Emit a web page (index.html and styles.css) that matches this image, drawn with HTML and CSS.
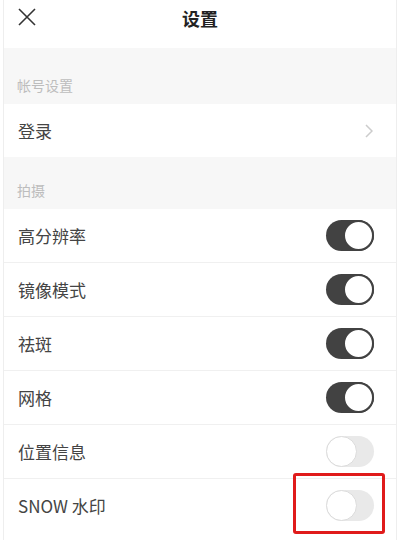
FILE: index.html
```html
<!DOCTYPE html>
<html lang="zh-CN">
<head>
    <meta charset="UTF-8">
    <meta name="viewport" content="width=device-width, initial-scale=1.0">
    <title>设置</title>
    <link rel="stylesheet" href="styles.css">
</head>
<body>
    <div class="page">
        <header class="topbar">
            <svg class="close" width="20" height="20" viewBox="0 0 20 20">
                <path d="M2 2 L18 18 M18 2 L2 18" stroke="#333" stroke-width="1.6" fill="none"/>
            </svg>
            <h1>设置</h1>
        </header>

        <div class="section">帐号设置</div>
        <div class="row">
            <span>登录</span>
            <svg class="chevron" width="8" height="14" viewBox="0 0 8 14">
                <path d="M1 1 L7 7 L1 13" stroke="#ccc" stroke-width="1.5" fill="none"/>
            </svg>
        </div>

        <div class="section short">拍摄</div>
        <div class="row"><span>高分辨率</span><span class="toggle on"></span></div>
        <div class="row"><span>镜像模式</span><span class="toggle on"></span></div>
        <div class="row"><span>祛斑</span><span class="toggle on"></span></div>
        <div class="row"><span>网格</span><span class="toggle on"></span></div>
        <div class="row"><span>位置信息</span><span class="toggle"></span></div>
        <div class="row"><span>SNOW 水印</span><span class="toggle"></span><span class="mark"></span></div>
    </div>
</body>
</html>
```

FILE: styles.css
```css
body {
    margin: 0;
    font-family: "Noto Sans CJK SC", "Noto Sans", sans-serif;
    background: #fff;
    color: #444;
}
.page {
    width: 394px;
    height: 540px;
    margin: 0 3px;
    overflow: hidden;
    box-sizing: border-box;
    border-left: 1px solid #eee;
    border-right: 1px solid #eee;
}
.topbar {
    height: 48px;
    position: relative;
    display: flex;
    justify-content: center;
    background: #fff;
}
.topbar h1 {
    margin: 0;
    font-size: 18px;
    font-weight: bold;
    color: #222;
    line-height: 36px;
}
.close {
    position: absolute;
    left: 13px;
    top: 7px;
}
.section {
    height: 56px;
    background: #f7f7f7;
    display: flex;
    align-items: flex-end;
    padding: 0 0 9px 13px;
    box-sizing: border-box;
    font-size: 14px;
    color: #bdbdbd;
}
.section.short {
    height: 52px;
}
.row {
    position: relative;
    height: 54px;
    display: flex;
    align-items: center;
    justify-content: space-between;
    padding: 0 22px 0 14px;
    border-top: 1px solid #f0f0f0;
    box-sizing: border-box;
    font-size: 17px;
}
.section + .row {
    height: 53px;
    border-top: none;
}
.chevron {
    margin-right: 1px;
}
.toggle {
    position: relative;
    width: 48px;
    height: 31px;
    border-radius: 16px;
    background: #e9e9e9;
    box-sizing: border-box;
}
.toggle::after {
    content: "";
    position: absolute;
    top: 0;
    left: 0;
    width: 31px;
    height: 31px;
    border-radius: 50%;
    background: #fff;
    border: 1px solid #dcdcdc;
    box-sizing: border-box;
}
.toggle.on {
    background: #424242;
}
.toggle.on::after {
    left: 17px;
    border: 2px solid #424242;
}
.mark {
    position: absolute;
    left: 289px;
    top: -6px;
    width: 92px;
    height: 61px;
    border: 3px solid #e01b1b;
    border-radius: 3px;
    box-sizing: border-box;
}
```
